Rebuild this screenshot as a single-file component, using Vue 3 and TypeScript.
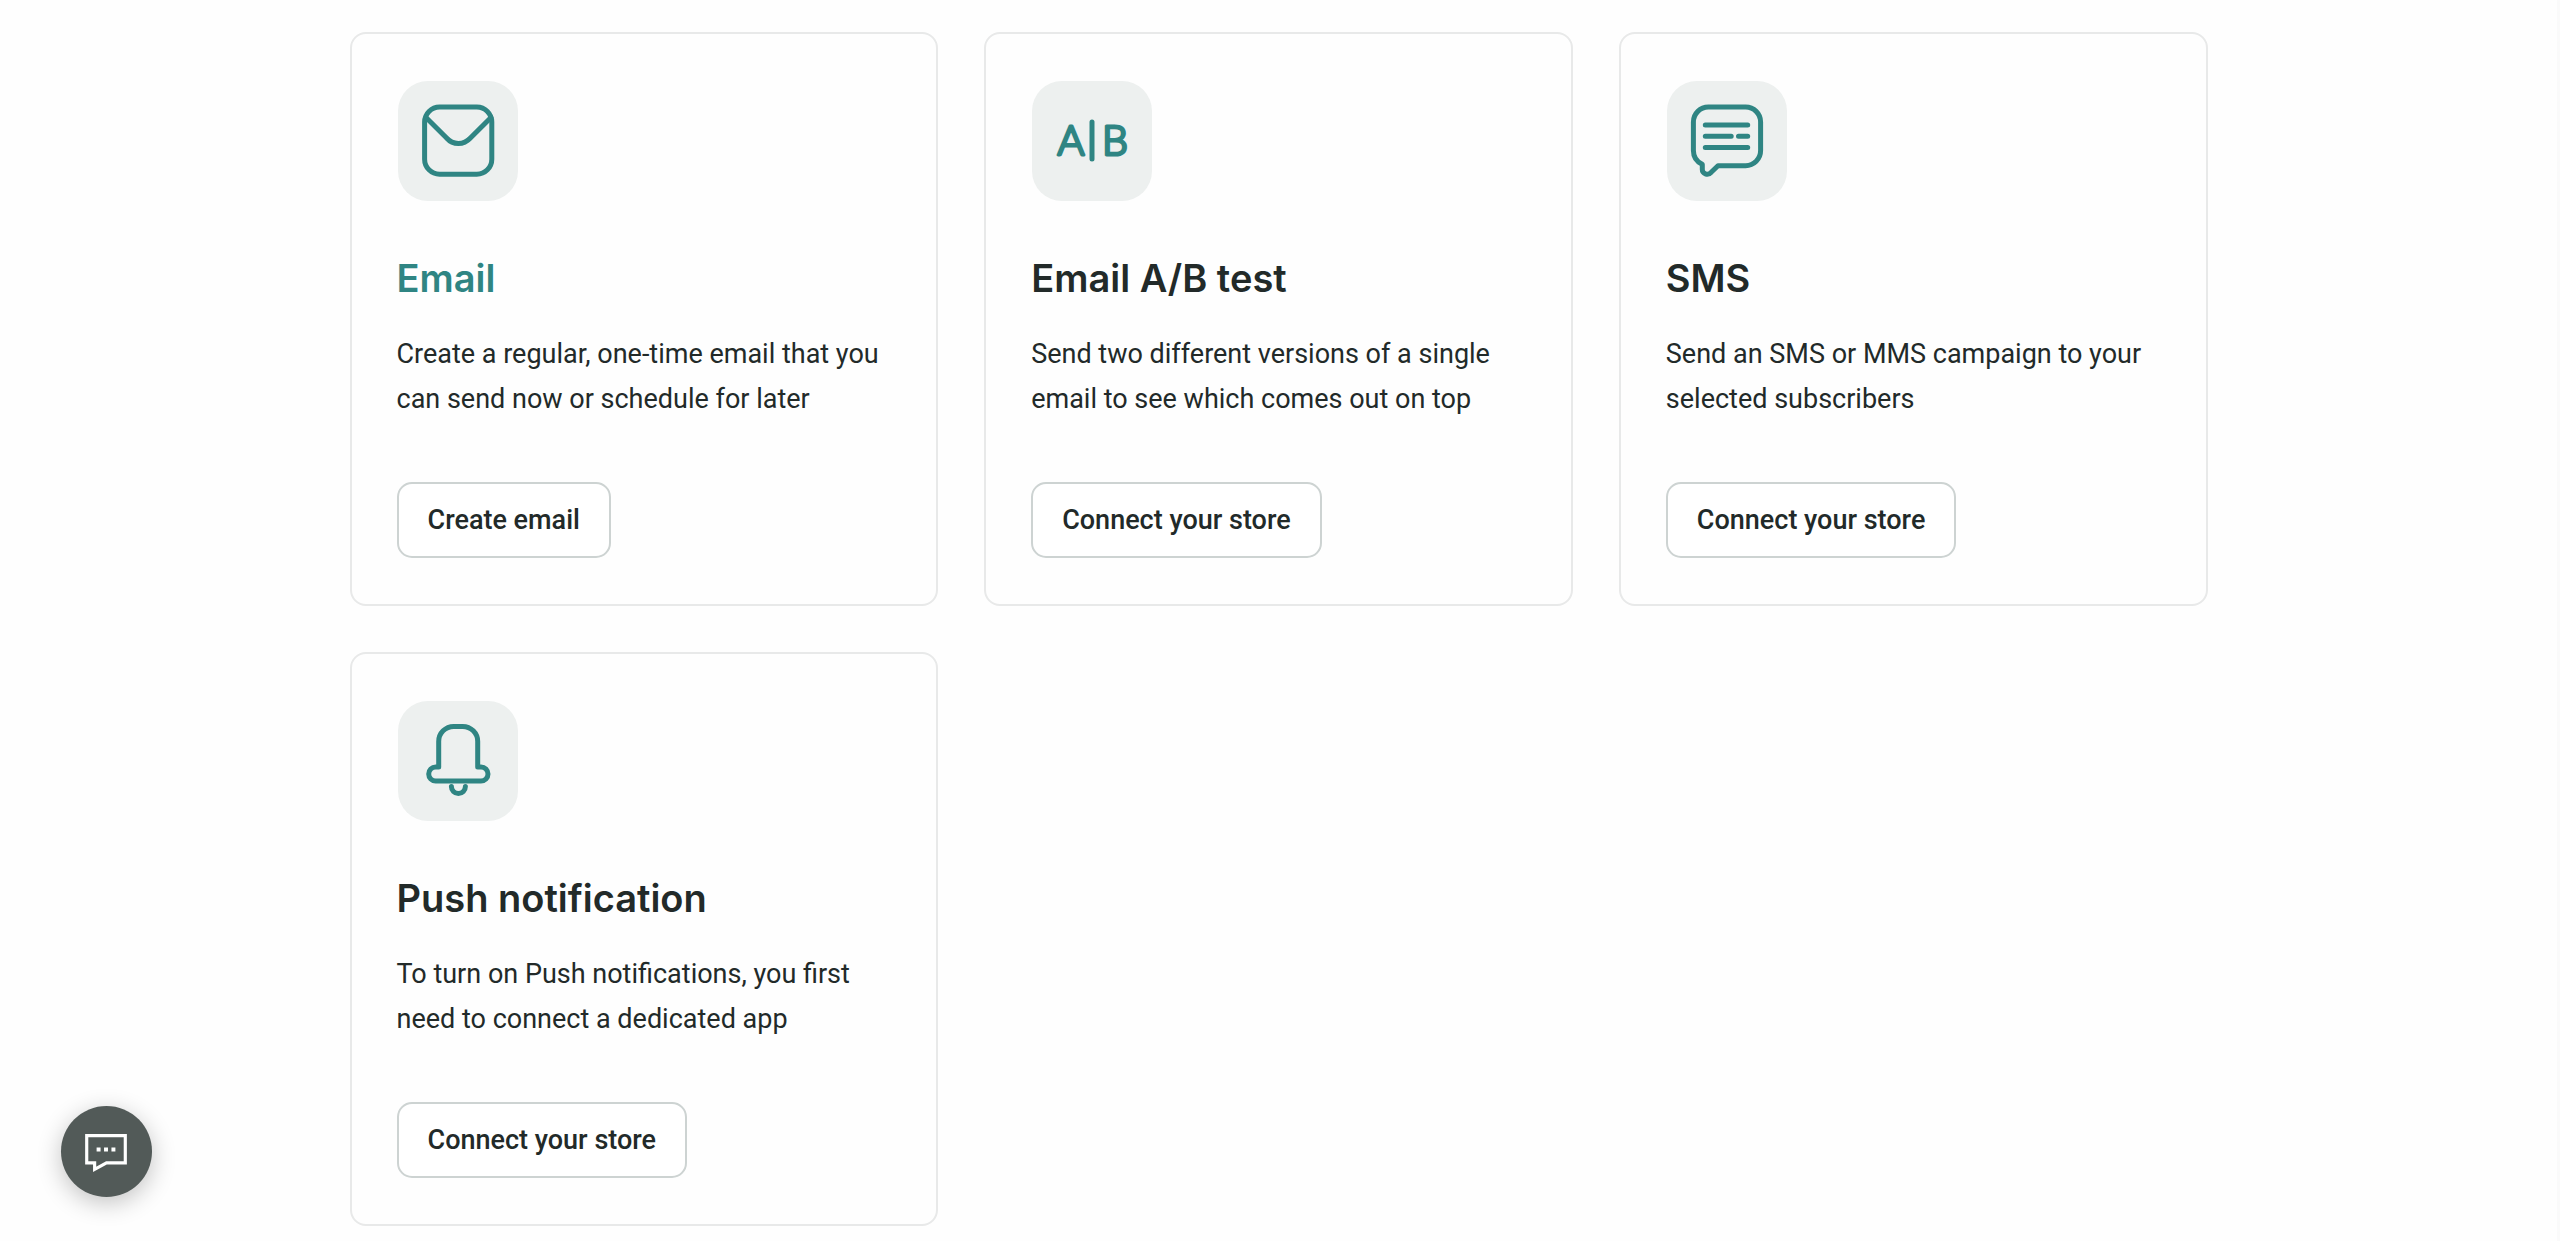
<script setup lang="ts">
type IconName = 'email' | 'abTest' | 'sms' | 'push'

interface CampaignType {
  title: string
  description: string
  action: string
  icon: IconName
  active?: boolean
}

const campaignTypes: CampaignType[] = [
  {
    title: 'Email',
    description: 'Create a regular, one-time email that you can send now or schedule for later',
    action: 'Create email',
    icon: 'email',
    active: true,
  },
  {
    title: 'Email A/B test',
    description: 'Send two different versions of a single email to see which comes out on top',
    action: 'Connect your store',
    icon: 'abTest',
  },
  {
    title: 'SMS',
    description: 'Send an SMS or MMS campaign to your selected subscribers',
    action: 'Connect your store',
    icon: 'sms',
  },
  {
    title: 'Push notification',
    description: 'To turn on Push notifications, you first need to connect a dedicated app',
    action: 'Connect your store',
    icon: 'push',
  },
]
</script>

<template>
  <div class="page">
    <main class="grid">
      <article v-for="item in campaignTypes" :key="item.title" class="card">
        <svg class="icon" viewBox="0 0 122 122" aria-hidden="true">
          <rect class="tile" x="1" y="1" width="120" height="120" rx="30" />
          <g v-if="item.icon === 'email'" class="stroke">
            <rect x="27.6" y="27" width="67.2" height="67.2" rx="15" />
            <path d="M29 37.5 49.6 58C56 65.3 66.6 65.3 73.4 58L94 37.5" />
          </g>
          <g v-else-if="item.icon === 'abTest'">
            <text class="letter" x="40" y="75">A</text>
            <path class="stroke" d="M61 42V79" />
            <text class="letter" x="84" y="75">B</text>
          </g>
          <g v-else-if="item.icon === 'sms'" class="stroke">
            <path d="M42.5 27H79.5A15 15 0 0 1 94.6 42V70.6A15 15 0 0 1 79.5 85.7H52L45.2 92.3C41.7 96.3 36.3 93.5 36.3 89.5V84.4C31 82 27.4 77 27.4 70.6V42A15 15 0 0 1 42.5 27Z" />
            <path d="M39.3 45H81.7M39.3 56.3H65.2M72.5 56.3H81.7M39.3 67.6H81.7" />
          </g>
          <g v-else class="stroke">
            <path d="M56.7 26.4H65.7A15 15 0 0 1 80.7 41.4V67H84A7 7 0 0 1 91 74A7 7 0 0 1 84 81H38.7A7 7 0 0 1 31.7 74A7 7 0 0 1 38.7 67H41.7V41.4A15 15 0 0 1 56.7 26.4Z" />
            <path d="M54.4 86.5A7 7 0 0 0 68.4 86.5" />
          </g>
        </svg>
        <h2 class="title" :class="{ active: item.active }">{{ item.title }}</h2>
        <p class="description">{{ item.description }}</p>
        <button type="button" class="action">{{ item.action }}</button>
      </article>
    </main>

    <button type="button" class="chat" aria-label="Open chat">
      <svg viewBox="0 0 92 92" aria-hidden="true">
        <path class="bubble" d="M26 30H65V57.5H46L34 64V57.5H26Z" />
        <path class="dots" d="M36 42h4v4h-4zM43.5 42h4v4h-4zM51 42h4v4h-4z" />
      </svg>
    </button>
  </div>
</template>

<style>
body {
  margin: 0;
  background: #fefefe;
}
</style>

<style scoped>
.page {
  box-sizing: border-box;
  min-height: 100vh;
  padding: 32px 48px 14px;
  border-right: 3px solid #fafafa;
  color: #222a29;
  font-family: Roboto, 'Liberation Sans', sans-serif;
}

.grid {
  display: grid;
  grid-template-columns: repeat(auto-fill, minmax(500px, 1fr));
  gap: 46px;
  max-width: 1858px;
  margin: 0 auto;
}

.card {
  display: flex;
  flex-direction: column;
  align-items: flex-start;
  box-sizing: border-box;
  padding: 46px 45px;
  border: 2px solid #e8e9e9;
  border-radius: 16px;
}

.icon {
  display: block;
  width: 122px;
  height: 122px;
}

.tile {
  fill: #edf0ef;
}

.stroke {
  fill: none;
  stroke: #2f8583;
  stroke-width: 5;
  stroke-linecap: round;
  stroke-linejoin: round;
}

.letter {
  fill: #2f8583;
  stroke: #2f8583;
  stroke-width: 3;
  stroke-linejoin: round;
  font-family: Lato, sans-serif;
  font-size: 41px;
  font-weight: 300;
  text-anchor: middle;
}

.title {
  margin: 52px 0 0;
  font-family: Inter, sans-serif;
  font-size: 38px;
  font-weight: 600;
  line-height: 48px;
}

.title.active {
  color: #2f8583;
}

.description {
  margin: 30px 0 60px;
  font-size: 27px;
  line-height: 45px;
}

.action {
  height: 76px;
  margin-top: auto;
  padding: 0 29px;
  border: 2px solid #cdd3d2;
  border-radius: 15px;
  background: #fff;
  color: inherit;
  font-family: inherit;
  font-size: 27px;
  font-weight: 500;
  cursor: pointer;
}

.chat {
  position: fixed;
  bottom: 44px;
  left: 61px;
  width: 91px;
  height: 91px;
  padding: 0;
  border: 0;
  border-radius: 50%;
  background: #525a58;
  box-shadow: 0 6px 24px rgba(0, 0, 0, 0.24);
  cursor: pointer;
}

.chat svg {
  display: block;
  width: 100%;
  height: 100%;
}

.bubble {
  fill: none;
  stroke: #fff;
  stroke-width: 3.2;
}

.dots {
  fill: #fff;
}
</style>
